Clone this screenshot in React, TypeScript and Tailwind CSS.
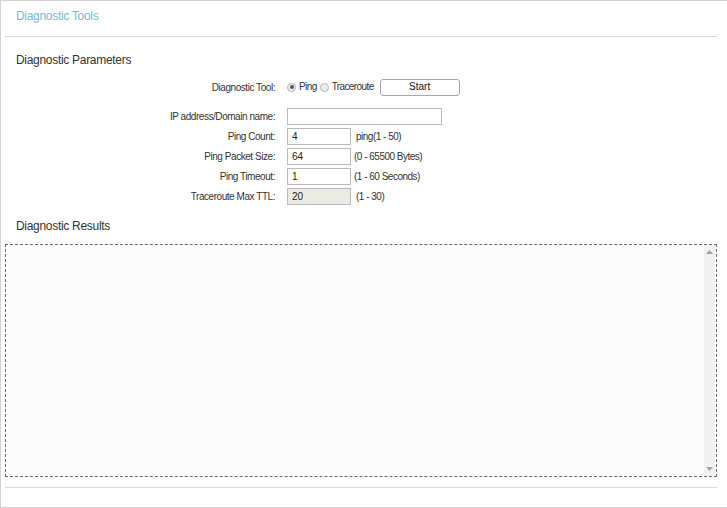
import React from "react";

const font = { fontFamily: '"Liberation Sans", Arial, sans-serif' };

function Label({ children }: { children: React.ReactNode }) {
  return (
    <div className="w-[270px] shrink-0 text-right text-[10px] tracking-[-0.45px] text-[#333]">
      {children}
    </div>
  );
}

function Hint({ children, ml }: { children: React.ReactNode; ml: string }) {
  return <span className={`text-[10px] tracking-[-0.5px] text-[#333] ${ml}`}>{children}</span>;
}

function Radio({ checked }: { checked?: boolean }) {
  return (
    <span className="flex h-[9px] w-[9px] items-center justify-center rounded-full border border-[#b5b5b5] bg-[#ececec]">
      {checked ? <span className="h-[4px] w-[4px] rounded-full bg-[#555]" /> : null}
    </span>
  );
}

function TextInput({ value, w, disabled }: { value: string; w: string; disabled?: boolean }) {
  return (
    <div
      className={`ml-[12px] flex h-[17px] items-center border border-[#b9b9b9] pl-[4px] text-[10px] text-[#222] ${w} ${
        disabled ? "bg-[#ebebe4]" : "bg-white"
      }`}
    >
      {value}
    </div>
  );
}

export default function App() {
  return (
    <div style={font} className="h-[508px] w-[727px] overflow-hidden border-b border-l border-t border-[#d4d4d4] bg-white">
      <div className="flex h-[506px] flex-col pl-[4px] pr-[10px]">
        <div className="h-[36px] border-b border-[#d9d9d9] pl-[11px] pt-[7px] text-[12px] leading-[16px] tracking-[-0.3px] text-[#71bcd1]">
          Diagnostic Tools
        </div>
        <div className="mt-[15px] pl-[11px] text-[12px] leading-[16px] tracking-[-0.3px] text-[#333]">
          Diagnostic Parameters
        </div>

        <div className="mt-[9px] flex h-[20px] items-center">
          <Label>Diagnostic Tool:</Label>
          <div className="ml-[12px] flex items-center text-[10px] leading-[12px] tracking-[-0.6px] text-[#333]">
            <Radio checked />
            <span className="ml-[3px]">Ping</span>
            <span className="ml-[3px]">
              <Radio />
            </span>
            <span className="ml-[3px]">Traceroute</span>
            <button className="ml-[6px] flex h-[17px] w-[80px] items-center justify-center rounded-[3px] border border-[#a8a8a8] bg-white text-[10px] tracking-normal text-[#111]">
              Start
            </button>
          </div>
        </div>

        <div className="mt-[9px] flex h-[20px] items-center">
          <Label>IP address/Domain name:</Label>
          <TextInput value="" w="w-[155px]" />
        </div>
        <div className="flex h-[20px] items-center">
          <Label>Ping Count:</Label>
          <TextInput value="4" w="w-[64px]" />
          <Hint ml="ml-[5px]">ping(1 - 50)</Hint>
        </div>
        <div className="flex h-[20px] items-center">
          <Label>Ping Packet Size:</Label>
          <TextInput value="64" w="w-[64px]" />
          <Hint ml="ml-[3px]">(0 - 65500 Bytes)</Hint>
        </div>
        <div className="flex h-[20px] items-center">
          <Label>Ping Timeout:</Label>
          <TextInput value="1" w="w-[64px]" />
          <Hint ml="ml-[3px]">(1 - 60 Seconds)</Hint>
        </div>
        <div className="flex h-[20px] items-center">
          <Label>Traceroute Max TTL:</Label>
          <TextInput value="20" w="w-[64px]" disabled />
          <Hint ml="ml-[5px]">(1 - 30)</Hint>
        </div>

        <div className="mt-[12px] pl-[11px] text-[12px] leading-[16px] tracking-[-0.3px] text-[#333]">
          Diagnostic Results
        </div>

        <div className="mt-[10px] flex h-[233px] border border-dashed border-[#6a6a6a] bg-[#fbfcfb]">
          <div className="flex-1" />
          <div className="mr-[1px] flex w-[11px] flex-col items-center justify-between bg-[#f1f1f1] py-[5px]">
            <svg width="7" height="4" viewBox="0 0 7 4">
              <path d="M0 4 L3.5 0 L7 4 Z" fill="#a3a3a3" />
            </svg>
            <svg width="7" height="4" viewBox="0 0 7 4">
              <path d="M0 0 L3.5 4 L7 0 Z" fill="#a3a3a3" />
            </svg>
          </div>
        </div>

        <div className="mt-[10px] border-t border-[#d9d9d9]" />
      </div>
    </div>
  );
}
